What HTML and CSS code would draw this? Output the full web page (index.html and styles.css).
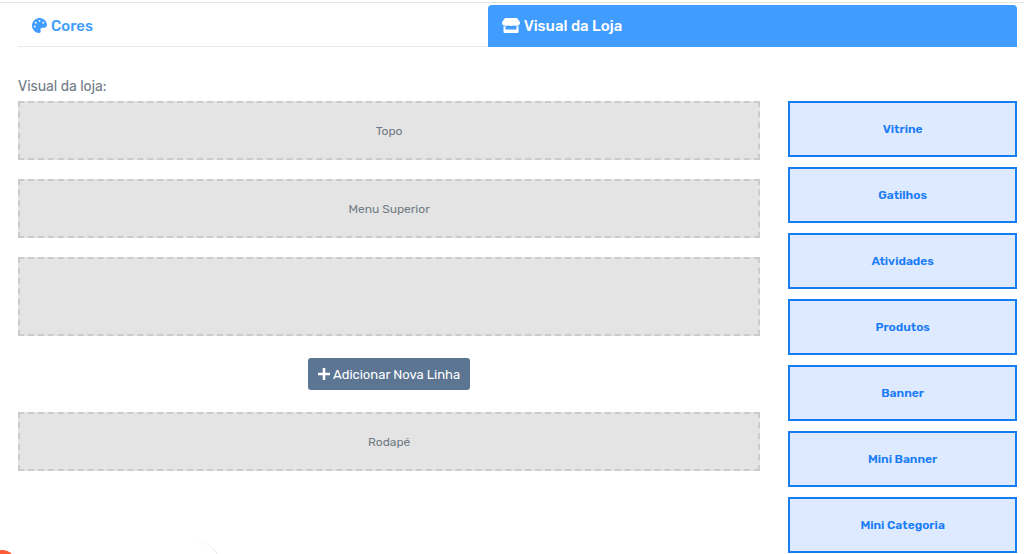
FILE: index.html
```html
<!DOCTYPE html>
<html lang="pt-BR">
<head>
  <meta charset="UTF-8">
  <meta name="viewport" content="width=device-width, initial-scale=1.0">
  <title>Visual da Loja</title>
  <link rel="stylesheet" href="styles.css">
</head>
<body>
  <main class="page">
    <nav class="tabs">
      <a class="tab" href="#cores">
        <svg class="icon icon-palette" viewBox="0 0 512 512" aria-hidden="true"><path fill="currentColor" d="M204 5C105 24 25 104 5 203c-37 187 131 325 249 306 38-6 57-51 39-85-21-42 9-91 56-91h74c49 0 89-41 89-90C511 95 371-27 204 5zM96 320a32 32 0 1 1 0-64 32 32 0 0 1 0 64zm32-128a32 32 0 1 1 0-64 32 32 0 0 1 0 64zm128-64a32 32 0 1 1 0-64 32 32 0 0 1 0 64zm128 64a32 32 0 1 1 0-64 32 32 0 0 1 0 64z"/></svg>
        <span>Cores</span>
      </a>
      <a class="tab active" href="#visual">
        <svg class="icon icon-store" viewBox="0 0 18 15" aria-hidden="true"><path fill="currentColor" d="M3 0h12l2.600 3.600c.9 1.900 0 3.700-1.600 3.900H2C.4 7.300-.5 5.500.4 3.600zM1.500 8.300h2V11.500h11V8.300h2V14q0 1-1 1H2.500q-1 0-1-1z"/><path fill="currentColor" d="M3.500 7h2v1h-2zM7.500 7h3v1h-3zM12.500 7h2v1h-2z"/></svg>
        <span>Visual da Loja</span>
      </a>
    </nav>

    <div class="editor">
      <p class="label">Visual da loja:</p>
      <section class="rows">
        <div class="row">Topo</div>
        <div class="row">Menu Superior</div>
        <div class="row row-empty"></div>
        <button class="add-row" type="button">
          <svg class="icon icon-plus" viewBox="0 0 12 12" aria-hidden="true"><path fill="currentColor" d="M4.700 0h2.600v4.700H12v2.600H7.300V12H4.700V7.300H0V4.700h4.700z"/></svg>
          <span>Adicionar Nova Linha</span>
        </button>
        <div class="row">Rodapé</div>
      </section>
      <aside class="blocks">
        <button class="block" type="button">Vitrine</button>
        <button class="block" type="button">Gatilhos</button>
        <button class="block" type="button">Atividades</button>
        <button class="block" type="button">Produtos</button>
        <button class="block" type="button">Banner</button>
        <button class="block" type="button">Mini Banner</button>
        <button class="block" type="button">Mini Categoria</button>
      </aside>
    </div>
  </main>

  <div class="chat">
    <span class="chat-dot"></span>
  </div>
</body>
</html>
```

FILE: styles.css
```css
* { box-sizing: border-box; }
body { margin: 0; font-family: Rubik, Roboto, sans-serif; font-size: 14px; color: #707a84; background-color: #fff; }
.page { margin-top: 2px; padding: 2px 7px 0 18px; border-top: 1px solid #e4e4e4; }

.tabs { display: flex; }
.tab { display: flex; flex: 1 1 auto; align-items: center; gap: 4px; height: 42px; padding: 0 14px; border-bottom: 1px solid #e9ebed; color: #409cff; font-size: 15px; font-weight: 500; text-decoration: none; }
.tab.active { color: #fff; background-color: #409cff; border-bottom-color: #409cff; border-radius: 4px 4px 0 0; }
.icon { display: block; flex: none; }
.icon-palette { width: 15px; height: 15px; }
.icon-store { width: 18px; height: 15px; }
.icon-plus { width: 12px; height: 12px; }

.editor { display: grid; grid-template-columns: repeat(12, 1fr); column-gap: 28px; align-items: start; padding-top: 30px; }
.label { grid-column: 1 / -1; margin: 0 0 4px; font-size: 14px; line-height: 20px; }
.rows { grid-column: span 9; display: flex; flex-direction: column; }
.row { display: flex; align-items: center; justify-content: center; min-height: 59px; margin-bottom: 19px; border: 2px dashed #cbcbcb; background-color: #e4e4e4; font-size: 12px; }
.row-empty { min-height: 79px; margin-bottom: 22px; }
.add-row { display: flex; align-items: center; align-self: center; gap: 3px; height: 32px; margin-bottom: 22px; padding: 0 10px; border: 0; border-radius: 3px; background-color: #5b7593; color: #fff; font-family: inherit; font-size: 13px; font-weight: 400; cursor: pointer; }
.blocks { grid-column: span 3; display: flex; flex-direction: column; gap: 10px; }
.block { height: 56px; padding: 0; border: 2px solid #157df0; background-color: #deeaff; color: #1a7cf8; font-family: inherit; font-size: 12px; font-weight: 600; cursor: pointer; }

.chat { position: fixed; left: -40px; bottom: -60px; width: 262px; height: 73px; border-right: 1px solid #e4e4e4; border-radius: 28px; pointer-events: none; }
.chat-dot { position: absolute; left: 28px; top: 9px; width: 28px; height: 28px; border-radius: 50%; background-color: #ff5c35; }
```
